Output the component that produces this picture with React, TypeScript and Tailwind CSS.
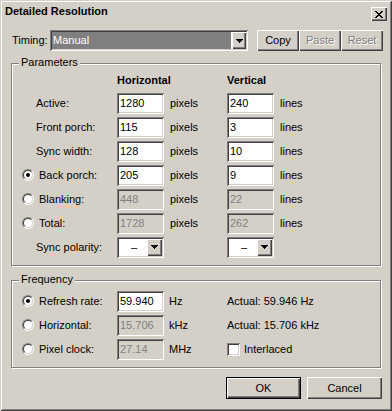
import React from 'react';

const raised =
  'shadow-[inset_1px_1px_0_#fff,inset_-1px_-1px_0_#404040,inset_-2px_-2px_0_#808080]';
const sunken =
  'shadow-[inset_1px_1px_0_#808080,inset_-1px_-1px_0_#fff,inset_2px_2px_0_#404040,inset_-2px_-2px_0_#d4d0c8]';

function Arrow() {
  return (
    <svg width="7" height="4" shapeRendering="crispEdges">
      <rect x="0" y="0" width="7" height="1" fill="#000" />
      <rect x="1" y="1" width="5" height="1" fill="#000" />
      <rect x="2" y="2" width="3" height="1" fill="#000" />
      <rect x="3" y="3" width="1" height="1" fill="#000" />
    </svg>
  );
}

function CloseGlyph() {
  const px = [
    [0, 0], [1, 0], [6, 0], [7, 0],
    [1, 1], [2, 1], [5, 1], [6, 1],
    [2, 2], [3, 2], [4, 2], [5, 2],
    [3, 3], [4, 3],
    [2, 4], [3, 4], [4, 4], [5, 4],
    [1, 5], [2, 5], [5, 5], [6, 5],
    [0, 6], [1, 6], [6, 6], [7, 6],
  ];
  return (
    <svg width="8" height="7" shapeRendering="crispEdges">
      {px.map(([x, y]) => (
        <rect key={`${x}-${y}`} x={x} y={y} width="1" height="1" fill="#000" />
      ))}
    </svg>
  );
}

function DropButton({ w = 'w-[15px]' }: { w?: string }) {
  return (
    <div className={`flex h-full ${w} items-center justify-center bg-[#d4d0c8] ${raised}`}>
      <Arrow />
    </div>
  );
}

function Button({
  children,
  disabled,
  def,
  className = '',
}: {
  children: React.ReactNode;
  disabled?: boolean;
  def?: boolean;
  className?: string;
}) {
  const bevel = def
    ? 'shadow-[inset_0_0_0_1px_#000,inset_2px_2px_0_#fff,inset_-2px_-2px_0_#404040,inset_-3px_-3px_0_#808080]'
    : raised;
  return (
    <div
      className={`flex items-center justify-center bg-[#d4d0c8] ${bevel} ${
        disabled ? 'text-[#808080] [text-shadow:1px_1px_0_#fff]' : ''
      } ${className}`}
    >
      {children}
    </div>
  );
}

function Edit({ value, disabled }: { value: string; disabled?: boolean }) {
  return (
    <div
      className={`flex h-[21px] w-[47px] items-center pl-[3px] ${sunken} ${
        disabled ? 'bg-[#d4d0c8] text-[#808080]' : 'bg-white'
      }`}
    >
      {value}
    </div>
  );
}

function Combo() {
  return (
    <div className={`flex h-[21px] w-[47px] bg-white p-[2px] ${sunken}`}>
      <div className="flex flex-1 items-center justify-center pl-[2px]">–</div>
      <DropButton />
    </div>
  );
}

function Radio({ checked }: { checked?: boolean }) {
  return (
    <span className="block h-[12px] w-[12px] rounded-full border border-t-[#808080] border-l-[#808080] border-b-white border-r-white">
      <span className="flex h-full w-full items-center justify-center rounded-full border border-t-[#404040] border-l-[#404040] border-b-[#d4d0c8] border-r-[#d4d0c8] bg-white">
        {checked && <span className="block h-[4px] w-[4px] rounded-full bg-black" />}
      </span>
    </span>
  );
}

function Label({ text, radio, checked }: { text: string; radio?: boolean; checked?: boolean }) {
  if (!radio) return <div className="w-[105px] pl-[24px]">{text}</div>;
  return (
    <div className="flex w-[105px] items-center pl-[10px]">
      <Radio checked={checked} />
      <span className="ml-[5px]">{text}</span>
    </div>
  );
}

function Group({
  title,
  className = '',
  children,
}: {
  title: string;
  className?: string;
  children: React.ReactNode;
}) {
  return (
    <div
      className={`relative mx-[11px] border border-[#808080] shadow-[inset_1px_1px_0_#fff,1px_1px_0_#fff] ${className}`}
    >
      <span className="absolute -top-[8px] left-[7px] bg-[#d4d0c8] px-[2px]">{title}</span>
      {children}
    </div>
  );
}

const params = [
  { label: 'Active:', h: '1280', v: '240' },
  { label: 'Front porch:', h: '115', v: '3' },
  { label: 'Sync width:', h: '128', v: '10' },
  { label: 'Back porch:', h: '205', v: '9', radio: true, checked: true },
  { label: 'Blanking:', h: '448', v: '22', radio: true, dis: true },
  { label: 'Total:', h: '1728', v: '262', radio: true, dis: true },
];

export default function App() {
  return (
    <div className="flex h-[411px] w-[392px] flex-col bg-[#d4d0c8] font-['Liberation_Sans',Arial,sans-serif] text-[11px] leading-[13px] text-black shadow-[inset_1px_1px_0_#d4d0c8,inset_-1px_-1px_0_#404040,inset_2px_2px_0_#fff,inset_-2px_-2px_0_#808080]">
      <div className="flex h-[22px] items-start justify-between px-[5px]">
        <span className="mt-[5px] font-bold">Detailed Resolution</span>
        <Button className="mt-[7px] h-[14px] w-[16px]">
          <CloseGlyph />
        </Button>
      </div>

      <div className="ml-[12px] mt-[8px] flex h-[21px] items-center">
        <span className="w-[38px]">Timing:</span>
        <div className={`flex h-[21px] w-[198px] bg-white p-[2px] ${sunken}`}>
          <div className="flex flex-1 pr-px">
            <div className="flex flex-1 items-center bg-[#808080] pl-px text-white">Manual</div>
          </div>
          <DropButton w="w-[14px]" />
        </div>
        <div className="ml-[9px] flex">
          <Button className="h-[21px] w-[42px]">Copy</Button>
          <Button className="h-[21px] w-[42px]" disabled>
            Paste
          </Button>
          <Button className="h-[21px] w-[42px]" disabled>
            Reset
          </Button>
        </div>
      </div>

      <Group title="Parameters" className="mt-[12px] pb-[6px] pt-[8px]">
        <div className="flex h-[16px] items-center font-bold">
          <span className="w-[105px]" />
          <span className="w-[110px]">Horizontal</span>
          <span>Vertical</span>
        </div>
        <div className="mt-[3px] flex flex-col">
          {params.map((p) => (
            <div key={p.label} className="flex h-[24px] items-center">
              <Label text={p.label} radio={p.radio} checked={p.checked} />
              <Edit value={p.h} disabled={p.dis} />
              <span className="w-[63px] pl-[6px]">pixels</span>
              <Edit value={p.v} disabled={p.dis} />
              <span className="pl-[6px]">lines</span>
            </div>
          ))}
          <div className="flex h-[24px] items-center">
            <Label text="Sync polarity:" />
            <Combo />
            <span className="w-[63px]" />
            <Combo />
          </div>
        </div>
      </Group>

      <Group title="Frequency" className="mt-[14px] pb-[6px] pt-[8px]">
        <div className="flex h-[24px] items-center">
          <Label text="Refresh rate:" radio checked />
          <Edit value="59.940" />
          <span className="w-[63px] pl-[5px]">Hz</span>
          <span>Actual: 59.946 Hz</span>
        </div>
        <div className="flex h-[24px] items-center">
          <Label text="Horizontal:" radio />
          <Edit value="15.706" disabled />
          <span className="w-[63px] pl-[5px]">kHz</span>
          <span>Actual: 15.706 kHz</span>
        </div>
        <div className="flex h-[24px] items-center">
          <Label text="Pixel clock:" radio />
          <Edit value="27.14" disabled />
          <span className="w-[63px] pl-[5px]">MHz</span>
          <span className={`block h-[13px] w-[13px] bg-white ${sunken}`} />
          <span className="ml-[4px]">Interlaced</span>
        </div>
      </Group>

      <div className="mt-[9px] flex justify-end gap-[6px] pr-[10px]">
        <Button def className="h-[22px] w-[75px]">
          OK
        </Button>
        <Button className="h-[22px] w-[75px]">Cancel</Button>
      </div>
    </div>
  );
}
